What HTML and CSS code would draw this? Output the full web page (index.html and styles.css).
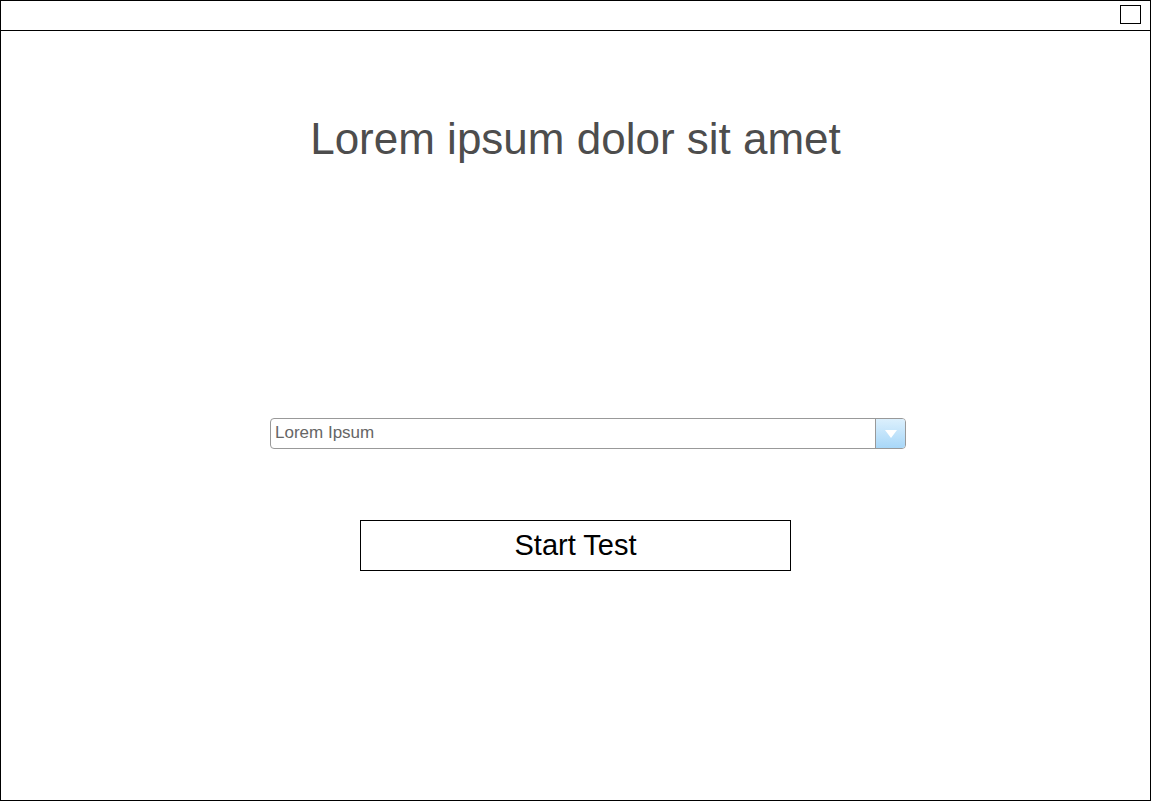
FILE: index.html
```html
<!DOCTYPE html>
<html>
<head>
<meta charset="utf-8">
<link rel="stylesheet" href="styles.css">
</head>
<body>
<div class="frame">
  <div class="topbar">
    <span class="winbox"></span>
  </div>
  <div class="content">
    <h1 class="title">Lorem ipsum dolor sit amet</h1>
    <div class="select">
      <span class="select-text">Lorem Ipsum</span>
      <span class="select-btn">
        <svg width="14" height="10" viewBox="0 0 14 10"><polygon points="1,1 13,1 7,9" fill="#ffffff"/></svg>
      </span>
    </div>
    <div class="start-btn">Start Test</div>
  </div>
</div>
</body>
</html>
```
FILE: styles.css
```css
html, body {
  margin: 0;
  padding: 0;
  background: #ffffff;
}
body {
  font-family: "Liberation Sans", Arial, sans-serif;
}
.frame {
  width: 1151px;
  height: 801px;
  box-sizing: border-box;
  border: 1px solid #000;
  display: flex;
  flex-direction: column;
}
.topbar {
  height: 30px;
  box-sizing: border-box;
  border-bottom: 1px solid #000;
  display: flex;
  justify-content: flex-end;
  align-items: flex-start;
  padding: 4px 9px 0 0;
}
.winbox {
  width: 21px;
  height: 19px;
  box-sizing: border-box;
  border: 1px solid #000;
}
.content {
  flex: 1;
  display: flex;
  flex-direction: column;
}
.title {
  margin: 84px 0 0 0;
  font-weight: normal;
  font-size: 44px;
  line-height: 48px;
  color: #4d4d4d;
  text-align: center;
}
.select {
  margin: 255px 0 0 269px;
  width: 636px;
  height: 31px;
  box-sizing: border-box;
  border: 1px solid #999;
  border-radius: 4px;
  display: flex;
  align-items: stretch;
  overflow: hidden;
}
.select-text {
  flex: 1;
  font-size: 17px;
  line-height: 28px;
  color: #666;
  padding-left: 4px;
}
.select-btn {
  width: 29px;
  border-left: 1px solid #999;
  background: linear-gradient(#dcf0fd, #a8d7f8);
  display: flex;
  align-items: center;
  justify-content: center;
}
.start-btn {
  margin: 71px 0 0 359px;
  width: 431px;
  height: 51px;
  box-sizing: border-box;
  border: 1px solid #000;
  font-size: 29px;
  line-height: 49px;
  text-align: center;
  color: #000;
}
```
